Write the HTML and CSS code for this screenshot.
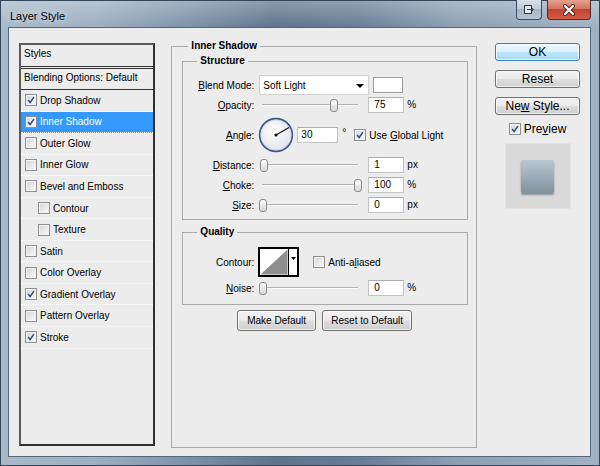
FILE: index.html
```html
<!DOCTYPE html>
<html lang="en">
<head>
  <meta charset="UTF-8">
  <title>Layer Style</title>
  <link rel="stylesheet" href="styles.css">
</head>
<body>
  <div class="window">
    <!-- Title bar -->
    <div class="titlebar">
      <span class="title">Layer Style</span>
      <div class="caption-buttons">
        <span class="cap-btn cap-help">
          <svg width="12" height="11" viewBox="0 0 12 11"><rect x="1.5" y="1.5" width="7" height="8" fill="#e8edf2" stroke="#2e3b48"/><path d="M4 5.5h6M8 3.5l2 2-2 2" fill="none" stroke="#2e3b48" stroke-width="1.2"/></svg>
        </span>
        <span class="cap-btn cap-close">
          <svg width="14" height="12" viewBox="0 0 14 12"><path d="M3 2l8 8M11 2l-8 8" stroke="#5a1d14" stroke-width="4" stroke-linecap="round"/><path d="M3 2l8 8M11 2l-8 8" stroke="#fff" stroke-width="2.2" stroke-linecap="round"/></svg>
        </span>
      </div>
    </div>

    <div class="client">
      <!-- Styles list -->
      <div class="styles-list">
        <div class="list-head first">Styles</div>
        <div class="list-head">Blending Options: Default</div>
        <div class="list-item"><span class="check"><svg viewBox="0 0 12 12"><path d="M2.5 6l2.5 3 4.5-6.5"/></svg></span>Drop Shadow</div>
        <div class="list-item selected"><span class="check"><svg viewBox="0 0 12 12"><path d="M2.5 6l2.5 3 4.5-6.5"/></svg></span>Inner Shadow</div>
        <div class="list-item"><span class="check"></span>Outer Glow</div>
        <div class="list-item"><span class="check"></span>Inner Glow</div>
        <div class="list-item"><span class="check"></span>Bevel and Emboss</div>
        <div class="list-item sub"><span class="check"></span>Contour</div>
        <div class="list-item sub"><span class="check"></span>Texture</div>
        <div class="list-item"><span class="check"></span>Satin</div>
        <div class="list-item"><span class="check"></span>Color Overlay</div>
        <div class="list-item"><span class="check"><svg viewBox="0 0 12 12"><path d="M2.5 6l2.5 3 4.5-6.5"/></svg></span>Gradient Overlay</div>
        <div class="list-item"><span class="check"></span>Pattern Overlay</div>
        <div class="list-item"><span class="check"><svg viewBox="0 0 12 12"><path d="M2.5 6l2.5 3 4.5-6.5"/></svg></span>Stroke</div>
      </div>

      <!-- Settings -->
      <fieldset class="group main-group">
        <legend>Inner Shadow</legend>

        <fieldset class="group sub-group">
          <legend>Structure</legend>

          <div class="row">
            <span class="label"><u>B</u>lend Mode:</span>
            <span class="select">Soft Light<span class="arrow"></span></span>
            <span class="swatch"></span>
          </div>

          <div class="row">
            <span class="label"><u>O</u>pacity:</span>
            <span class="slider"><span class="track"></span><span class="thumb" style="left: 71px"></span></span>
            <span class="num">75</span>
            <span class="unit">%</span>
          </div>

          <div class="row row-angle">
            <span class="label"><u>A</u>ngle:</span>
            <svg class="dial" width="36" height="36" viewBox="0 0 36 36">
              <defs>
                <radialGradient id="dialFill" cx="45%" cy="40%" r="60%">
                  <stop offset="0" stop-color="#ffffff"/>
                  <stop offset="1" stop-color="#dfe3ea"/>
                </radialGradient>
              </defs>
              <circle cx="18" cy="18" r="16.4" fill="url(#dialFill)" stroke="#3a5488" stroke-width="1.6"/>
              <circle cx="18" cy="18" r="15" fill="none" stroke="#c9d1de" stroke-width="0.8"/>
              <line x1="18" y1="18" x2="31" y2="10.5" stroke="#111" stroke-width="1.2"/>
              <circle cx="18" cy="18" r="1.6" fill="#111"/>
            </svg>
            <span class="num wide">30</span>
            <span class="deg">°</span>
            <span class="check"><svg viewBox="0 0 12 12"><path d="M2.5 6l2.5 3 4.5-6.5"/></svg></span>
            <span class="check-label">Use <u>G</u>lobal Light</span>
          </div>

          <div class="row">
            <span class="label"><u>D</u>istance:</span>
            <span class="slider"><span class="track"></span><span class="thumb" style="left: 1px"></span></span>
            <span class="num">1</span>
            <span class="unit">px</span>
          </div>

          <div class="row">
            <span class="label"><u>C</u>hoke:</span>
            <span class="slider"><span class="track"></span><span class="thumb" style="left: 95px"></span></span>
            <span class="num">100</span>
            <span class="unit">%</span>
          </div>

          <div class="row">
            <span class="label"><u>S</u>ize:</span>
            <span class="slider"><span class="track"></span><span class="thumb" style="left: 0px"></span></span>
            <span class="num">0</span>
            <span class="unit">px</span>
          </div>
        </fieldset>

        <fieldset class="group sub-group quality">
          <legend>Quality</legend>

          <div class="row row-contour">
            <span class="label">Contour:</span>
            <svg class="contour" width="41" height="30" viewBox="0 0 41 30">
              <rect x="1" y="1" width="39" height="28" fill="#fff" stroke="#000" stroke-width="2"/>
              <polygon points="2.5,27.5 29.5,2.5 29.5,27.5" fill="#8e8e8e"/>
              <line x1="30.5" y1="1" x2="30.5" y2="29" stroke="#000"/>
              <polygon points="33,10 38,10 35.5,13" fill="#000"/>
            </svg>
            <span class="check spaced"></span>
            <span class="check-label">Anti-a<u>l</u>iased</span>
          </div>

          <div class="row">
            <span class="label"><u>N</u>oise:</span>
            <span class="slider"><span class="track"></span><span class="thumb" style="left: 0px"></span></span>
            <span class="num">0</span>
            <span class="unit">%</span>
          </div>
        </fieldset>

        <div class="defaults">
          <span class="btn small make">Make Default</span>
          <span class="btn small reset">Reset to Default</span>
        </div>
      </fieldset>

      <!-- Right column -->
      <div class="side">
        <span class="btn ok">OK</span>
        <span class="btn">Reset</span>
        <span class="btn"><span>Ne<u>w</u> Style...</span></span>
        <div class="preview-toggle">
          <span class="check"><svg viewBox="0 0 12 12"><path d="M2.5 6l2.5 3 4.5-6.5"/></svg></span>
          <span>Pre<u>v</u>iew</span>
        </div>
        <div class="preview-box">
          <div class="preview-swatch"></div>
        </div>
      </div>
    </div>
  </div>
</body>
</html>
```

FILE: styles.css
```css
/* General */
* {
  box-sizing: border-box;
}

body {
  margin: 0;
  font-family: 'Liberation Sans', Arial, sans-serif;
  font-size: 10px;
  color: #000;
  overflow: hidden;
}

u {
  text-decoration-thickness: 1px;
  text-underline-offset: 1px;
}

/* Window frame */
.window {
  width: 600px;
  height: 466px;
  display: flex;
  flex-direction: column;
  padding: 0 8px 8px 7px;
  border: 1px solid #34475a;
  background:
    linear-gradient(180deg, rgba(255, 255, 255, 0.28), rgba(255, 255, 255, 0) 26px),
    linear-gradient(90deg, #a8b9ca 0%, #9caec1 16%, #7f95ab 30%, #5e748b 46%, #687e96 60%, #8b9fb3 76%, #a0b2c4 100%);
}

.titlebar {
  height: 26px;
  display: flex;
  justify-content: space-between;
  align-items: flex-start;
}

.title {
  margin: 9px 0 0 2px;
  font-size: 11px;
  line-height: 13px;
  text-shadow: 0 0 6px rgba(255, 255, 255, 0.8);
}

.caption-buttons {
  display: flex;
  gap: 5px;
  margin-top: -1px;
}

.cap-btn {
  height: 20px;
  display: flex;
  align-items: center;
  justify-content: center;
  border: 1px solid #3b4c5e;
  border-top: none;
  border-radius: 0 0 4px 4px;
}

.cap-help {
  width: 26px;
  background: linear-gradient(180deg, #d9e1e9, #c0ccd8 45%, #a6b5c4 50%, #b8c6d3);
}

.cap-close {
  width: 44px;
  border-color: #5a2a22;
  background: linear-gradient(180deg, #e6a08f, #d27563 45%, #c2412f 50%, #d35d46);
}

/* Client area */
.client {
  flex: 1;
  display: flex;
  align-items: flex-start;
  padding: 12px 10px 0 10px;
  background: #ececec;
  border: 1px solid #55687b;
}

/* Styles list */
.styles-list {
  width: 137px;
  height: 403px;
  margin-top: 3px;
  border: 2px solid #3e3e3e;
  border-color: #5a5a5a #303030 #303030 #5a5a5a;
  background: #ececec;
}

.list-head {
  height: 21px;
  padding: 2px 0 0 3px;
  line-height: 13px;
  border-bottom: 1px solid #333;
}

.list-head.first {
  height: 24px;
  border-bottom: 3px double #333;
}

.list-item {
  height: 21.55px;
  display: flex;
  align-items: center;
  padding: 0 0 0 4px;
  border-bottom: 1px dotted #fff;
  white-space: nowrap;
}

.list-item.sub {
  padding-left: 17px;
}

.list-item.selected {
  background: #3399ff;
  color: #fff;
}

/* Checkbox */
.check {
  width: 12px;
  height: 12px;
  flex: none;
  display: inline-flex;
  margin-right: 3px;
  border: 1px solid #8e8f8f;
  background: linear-gradient(135deg, #d2d4d8, #fbfbfb);
  box-shadow: inset 0 0 0 1px #f3f3f3;
}

.check svg {
  width: 10px;
  height: 10px;
}

.check path {
  fill: none;
  stroke: #34477f;
  stroke-width: 1.8;
}

/* Group boxes */
.group {
  margin: 0;
  min-width: 0;
  border: 1px solid #a9a9a9;
}

.group legend {
  padding: 0 3px;
  font-weight: bold;
  line-height: 12px;
}

.main-group {
  width: 307px;
  height: 408px;
  margin-left: 16px;
  padding: 3px 8px 0 10px;
}

.main-group > legend {
  margin-left: 6px;
}

.sub-group {
  padding: 8px 0 4px 0;
}

.sub-group > legend {
  margin-left: 14px;
}

.sub-group.quality {
  margin-top: 6px;
  padding-bottom: 6px;
}

/* Rows */
.row {
  height: 20px;
  display: flex;
  align-items: center;
  white-space: nowrap;
}

.row-angle {
  height: 40px;
}

.row-contour {
  height: 32px;
}

.label {
  width: 71px;
  margin-right: 4px;
  text-align: right;
}

.select {
  position: relative;
  width: 110px;
  height: 20px;
  margin-left: 1px;
  padding: 4px 0 0 3px;
  line-height: 12px;
  background: #fff;
  border: 1px solid #cfcfcf;
}

.select .arrow {
  position: absolute;
  right: 4px;
  top: 8px;
  border-left: 4px solid transparent;
  border-right: 4px solid transparent;
  border-top: 4px solid #000;
}

.swatch {
  width: 30px;
  height: 16px;
  margin-left: 4px;
  background: #fff;
  border: 1px solid #9c9c9c;
}

.slider {
  position: relative;
  width: 103px;
  height: 16px;
  margin-left: 1px;
}

.track {
  position: absolute;
  left: 3px;
  right: 4px;
  top: 7px;
  height: 2px;
  border-top: 1px solid #b3b3b3;
  border-bottom: 1px solid #fafafa;
}

.thumb {
  position: absolute;
  top: 2px;
  width: 8px;
  height: 13px;
  border: 1px solid #8a8a8a;
  border-radius: 3px;
  background: linear-gradient(180deg, #fafafa, #d8d8d8);
}

.num {
  width: 36px;
  height: 16px;
  margin-left: 6px;
  padding-left: 5px;
  line-height: 14px;
  background: #fff;
  border: 1px solid #c3c3c3;
  border-top-color: #aeaeae;
}

.num.wide {
  width: 41px;
  margin-left: 3px;
  padding-left: 3px;
}

.unit {
  margin-left: 3px;
  margin-bottom: 2px;
}

.deg {
  margin: 0 8px 6px 4px;
}

.check.spaced {
  margin-left: 14px;
}

.dial,
.contour {
  flex: none;
}

/* Buttons */
.btn {
  display: flex;
  align-items: center;
  justify-content: center;
  width: 85px;
  height: 18px;
  font-size: 12px;
  border: 1px solid #707070;
  border-radius: 3px;
  background: linear-gradient(180deg, #f2f2f2 0%, #ebebeb 48%, #dddddd 52%, #cfcfcf 100%);
  box-shadow: inset 0 0 0 1px rgba(255, 255, 255, 0.7);
  white-space: nowrap;
}

.btn.ok {
  border-color: #3c7fb1;
  background: linear-gradient(180deg, #eaf6fd 0%, #d9f0fc 48%, #bee6fd 52%, #a7d9f5 100%);
}

.btn.small {
  height: 21px;
  font-size: 10px;
}

.btn.make {
  width: 79px;
}

.btn.reset {
  width: 90px;
}

.defaults {
  display: flex;
  justify-content: center;
  gap: 6px;
  margin-top: 5px;
  margin-left: -1px;
}

/* Right column */
.side {
  width: 85px;
  margin: 3px 0 0 18px;
  display: flex;
  flex-direction: column;
  align-items: center;
  gap: 10px;
  font-size: 12px;
}

.side .btn + .btn {
  margin-top: -1px;
}

.preview-toggle {
  display: flex;
  align-items: center;
  height: 14px;
  margin-top: -3px;
}

.preview-toggle .check {
  margin-right: 3px;
}

.preview-box {
  width: 66px;
  height: 66px;
  margin-top: -3px;
  display: flex;
  align-items: center;
  justify-content: center;
  background: #d9d9d9;
  border: 1px solid #e4e4e4;
}

.preview-swatch {
  width: 33px;
  height: 33px;
  border-radius: 2px;
  background: linear-gradient(180deg, #b9c7d1, #7f929f);
  box-shadow: 0 2px 2px rgba(0, 0, 0, 0.35);
}
```
